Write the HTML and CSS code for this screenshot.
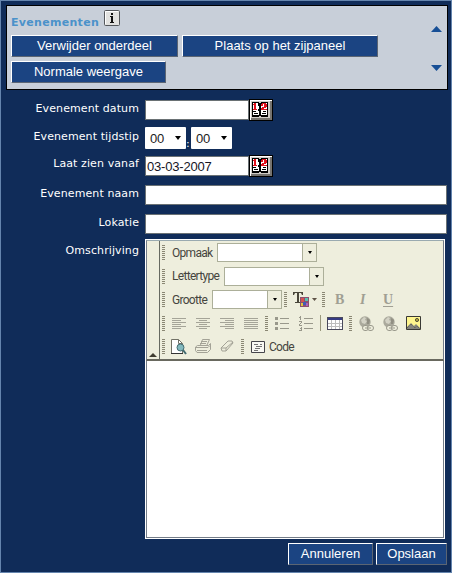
FILE: index.html
```html
<!DOCTYPE html>
<html lang="nl">
<head>
<meta charset="utf-8">
<title>Evenementen</title>
<link rel="stylesheet" href="styles.css">
</head>
<body>
<svg width="0" height="0" class="defs" aria-hidden="true">
  <symbol id="calendar" viewBox="0 0 24 22">
    <path fill="#000" d="M0 0h24v22H0z"/><path fill="#fff" d="M1 1h22v20H1z"/><path fill="#77746f" d="M2 2h21v19H2z"/><path fill="#d0cdc8" d="M2 2h19v17H2z"/>
    <path fill="#000" d="M3 3h7v1h2v-1h7v15h-7v-1h-2v1H3z"/><path fill="#fff" d="M4 4h6v12H4zM12 4h6v12h-6z"/>
    <path fill="#e0101c" d="M5 4h2v6h1v1H4v-1h1V6H4V5h1zM13 4h4v1h1v3h-1v1h-2v1h3v1h-6V9h1V8h2V5h-1v2h-2V5h1z"/>
    <path fill="#000" d="M9 4h1v3H9zM12 4h1v1h-1zM10 7h2v3h-2zM9 10h1v2H9zM10 12h2v5h-2zM5 14h4v1H5zM13 14h4v1h-4zM4 12h3v1H4zM14 12h3v1h-3z"/>
  </symbol>
  <symbol id="globe" viewBox="0 0 17 17">
    <circle cx="7" cy="7" r="5.7" fill="#aaa99c"/><path d="M3 5l3-3 2 1-1 2 2 1-2 3-3-1z" fill="#d3d2c5"/><path d="M9 3l3 2-1 4H9z" fill="#918f83"/>
    <g fill="#eeeedd" stroke="#99988b"><rect x="4.5" y="10.5" width="6" height="5" rx="2.5"/><rect x="9.5" y="10.5" width="6" height="5" rx="2.5"/><path d="M7 13h6"/></g>
  </symbol>
</svg>
<div class="frame">
  <header class="panel">
    <div class="panel-main">
      <div class="heading"><h1>Evenementen</h1>
        <svg class="info" width="16" height="16"><rect x=".5" y=".5" width="15" height="15" rx="1" fill="#e2e2e0" stroke="#55585c"/><path d="M1.500 14V1.500H14" stroke="#fff" fill="none"/><path d="M7 3h2v2H7zM6 6h3v6h1v1H6v-1h1V7H6z" fill="#111"/></svg>
      </div>
      <div class="actions"><button class="btn remove">Verwijder onderdeel</button><button class="btn place">Plaats op het zijpaneel</button><button class="btn normal">Normale weergave</button></div>
    </div>
    <div class="arrows">
      <svg width="11" height="6"><path d="M0 6l5.500-6L11 6z" fill="#174f96"/></svg>
      <svg width="11" height="6"><path d="M0 0h11L5.500 6z" fill="#174f96"/></svg>
    </div>
  </header>
  <main class="form">
    <label class="l1">Evenement datum</label><div class="field"><span class="input date"></span><svg class="cal" width="24" height="22"><use href="#calendar"/></svg></div>
    <label class="l2">Evenement tijdstip</label><div class="field"><span class="time">00<i class="down"></i></span><b class="colon">:</b><span class="time">00<i class="down"></i></span></div>
    <label class="l3">Laat zien vanaf</label><div class="field"><span class="input date"><span class="value">03-03-2007</span></span><svg class="cal" width="24" height="22"><use href="#calendar"/></svg></div>
    <label class="l4">Evenement naam</label><div class="field"><span class="input wide"></span></div>
    <label class="l5">Lokatie</label><div class="field"><span class="input wide"></span></div>
    <label class="l6">Omschrijving</label>
    <div class="editor">
      <div class="toolbar">
        <div class="gutter"><svg width="8" height="4"><path d="M0 4l4-4 4 4z" fill="#3f3c30"/></svg></div>
        <div class="rows">
          <div class="row"><i class="grip"></i><span class="name opmaak">Opmaak</span><span class="combo c100"><b><i></i></b></span></div>
          <div class="row"><i class="grip"></i><span class="name letter">Lettertype</span><span class="combo c100"><b><i></i></b></span></div>
          <div class="row"><i class="grip"></i><span class="name grootte">Grootte</span><span class="combo c70"><b><i></i></b></span><i class="grip second"></i>
            <svg class="gap6" width="25" height="17"><path fill="#49463a" d="M0 1h10v3H9l-1-2H6v9h2v1H2v-1h2V2H2L1 4H0z"/><path fill="#8a5170" d="M7 6h9v10H7z"/><path fill="#d45252" d="M8 7h3v4H8z"/><path fill="#59c1b1" d="M12 7h3v3h-3z"/><path fill="#e6c33d" d="M8 12h2v3H8z"/><path fill="#4359b6" d="M10 11h3v3h-3z"/><path fill="#ae60bd" d="M13 12h2v3h-2z"/><path fill="#5e5346" d="M19 7h5l-2.500 3z"/></svg>
            <i class="grip gap4"></i><span class="style bold">B</span><span class="style italic">I</span><span class="style underline">U</span>
          </div>
          <div class="row icons"><i class="grip"></i>
            <svg class="al1" width="14" height="13"><path d="M0 1.500h14M0 3.500h9M0 5.500h14M0 7.500h9M0 9.500h14M0 11.500h9" stroke="#a5a498"/></svg>
            <svg class="al" width="14" height="13"><path d="M0 1.500h14M3 3.500h8M0 5.500h14M3 7.500h8M0 9.500h14M3 11.500h8" stroke="#a5a498"/></svg>
            <svg class="al" width="14" height="13"><path d="M0 1.500h14M5 3.500h9M0 5.500h14M5 7.500h9M0 9.500h14M5 11.500h9" stroke="#a5a498"/></svg>
            <svg class="al" width="14" height="13"><path d="M0 1.500h14M0 3.500h14M0 5.500h14M0 7.500h14M0 9.500h14M0 11.500h14" stroke="#a5a498"/></svg>
            <i class="grip gap7"></i>
            <svg class="gap7" width="14" height="15"><path fill="#99988b" d="M0 1h3v3H0zM0 6h3v3H0zM0 11h3v3H0zM5 2h9v1H5zM5 7h9v1H5zM5 12h9v1H5z"/></svg>
            <svg class="al" width="14" height="15"><path fill="#99988b" d="M1 0h1v4H1zM0 1h1v1H0zM0 5h3v2H2v1H1v1h2v1H0V8h1V7h1V6H0zM0 11h3v4H0v-1h2v-1H1v-1h1v-1H0zM5 2h9v1H5zM5 7h9v1H5zM5 12h9v1H5z"/></svg>
            <i class="sep"></i>
            <svg class="gap6" width="16" height="13"><path fill="#49495c" d="M0 0h16v13H0z"/><path fill="#363b83" d="M1 1h14v2H1z"/><path fill="#fff" d="M1 3h14v9H1z"/><path d="M1 6.500h14M1 9.500h14M4.500 3v9M8.500 3v9M12.500 3v9" stroke="#bdbdbd"/></svg>
            <i class="grip gap6"></i>
            <svg class="gap6" width="17" height="17"><use href="#globe"/></svg><svg class="gap7" width="17" height="17"><use href="#globe"/></svg>
            <svg class="gap7" width="15" height="14"><path fill="#fff68e" stroke="#393935" d="M.5.500h14v13H.5z"/><path fill="#85857c" d="M1 11l4-4 3 3 2-2 4 4v1H1z"/><path d="M1 12l4-4 4 4 2-2 3 3" fill="none" stroke="#55554f" stroke-dasharray="1 1"/><circle cx="11" cy="4" r="1.600" fill="#b4aa43" stroke="#55513c"/></svg>
          </div>
          <div class="row"><i class="grip"></i>
            <svg class="preview" width="16" height="16"><path fill="#fff" stroke="#717166" d="M.5.500h7l4 4v10H.5z"/><path d="M0 14.500h12" stroke="#333"/><path d="M7.500.500v4h4" fill="none" stroke="#717166"/><circle cx="9.500" cy="8.500" r="3.500" fill="#83b9be" stroke="#426a70"/><path d="M12 11l3 4" stroke="#426a70" stroke-width="2"/></svg>
            <svg class="gap8" width="16" height="15"><path d="M5.500 6l2-5.500h7L12 6M2.500 6.500h11l2-2v6l-3 3H2l-1.500-2V8zM1 8.500h12l2-2M2 11.500h10M6 2.500h6M5 4.500h6" fill="none" stroke="#a3a296"/></svg>
            <svg class="gap9" width="14" height="13"><path d="M1 8l7-7h4l1 2-7 8H2zM1 8l5 0 7-6M6 8v3" fill="none" stroke="#a3a296"/></svg>
            <i class="grip gap7"></i>
            <svg class="gap7" width="14" height="12"><path d="M.5.500h13v11H.5z" fill="#f8f8f3" stroke="#45454b"/><path d="M3 3.500h4M5 5.500h6M4 7.500h5M3 9.500h4M9 3.500h2" stroke="#737373"/></svg><span class="code">Code</span>
          </div>
        </div>
      </div>
      <div class="canvas"></div>
    </div>
  </main>
  <footer><button class="btn cancel">Annuleren</button><button class="btn save">Opslaan</button></footer>
</div>
</body>
</html>
```

FILE: styles.css
```css
* { box-sizing: border-box; }
body { margin: 0; }
.defs { position: absolute; }
svg { display: block; flex: none; }
.frame { width: 452px; height: 573px; padding: 4px 3px 0 5px; background: #102c59; border: 1px solid #6585ae; font-family: "Liberation Sans", sans-serif; overflow: hidden; }
.panel { display: flex; justify-content: space-between; width: 442px; height: 85px; background: #c8cfd9; border: 1px solid #000; }
.panel-main { width: 390px; padding: 4px 0 0 4px; }
.heading { display: flex; height: 25px; }
h1 { margin: 4px 0 0; width: 93px; font: bold 11px/17px "DejaVu Sans", sans-serif; color: #4b92ca; letter-spacing: .3px; white-space: nowrap; }
.actions { display: flex; flex-wrap: wrap; gap: 4px; }
.btn { height: 22px; padding: 0 0 1px; border: 1px solid; border-color: #fff #5b6573 #5b6573 #fff; background: #1b4482; color: #fff; font: 13px/18px "Liberation Sans", sans-serif; white-space: nowrap; }
.remove { width: 167px; }
.place { width: 196px; }
.normal { width: 155px; }
.arrows { display: flex; flex-direction: column; gap: 33px; padding: 20px 5px 0 0; }
.form { display: grid; grid-template-columns: 133px 302px; grid-template-rows: 28px 28px 29px 29px 29px 301px; column-gap: 6px; padding-top: 9px; }
label { font: 11px/14px "DejaVu Sans", sans-serif; color: #fff; text-align: right; padding-top: 3px; white-space: nowrap; letter-spacing: .1px; }
.l3, .l6 { padding-top: 2px; }
.field { display: flex; align-items: flex-start; }
.input { height: 20px; margin-top: 1px; background: #fff; border: 1px solid #6a7174; }
.date { width: 104px; }
.wide { width: 302px; }
.value { display: block; font-size: 13px; line-height: 19px; letter-spacing: -.2px; padding-left: 1px; color: #151525; }
.time { display: flex; align-items: center; justify-content: space-between; width: 41px; height: 22px; padding: 0 5px; background: #fff; border-radius: 1px; font-size: 13px; letter-spacing: -.3px; color: #222; }
.down { border: 3.5px solid transparent; border-top: 4px solid #000; border-bottom: 0; }
.colon { width: 5px; font: 11px/34px "DejaVu Sans", sans-serif; height: 27px; color: #fff; }
.editor { width: 300px; height: 300px; margin-top: -3px; border: 1px solid #fff; display: flex; flex-direction: column; }
.toolbar { display: flex; height: 121px; background: #eeeedd; border: 1px solid #737c88; border-top-color: #9aaab0; border-bottom: 2px solid #69695f; }
.gutter { width: 13px; border-right: 1px solid #666960; display: flex; align-items: flex-end; padding: 0 0 2px 2px; }
.rows { padding: 0 0 0 2px; }
.row { display: flex; align-items: center; height: 23.5px; }
.grip { flex: none; width: 3px; height: 15px; background: repeating-linear-gradient(#8a8774 0 1px, #eeeedd 1px 2px); }
.name, .code { font: 12px/16px Roboto, sans-serif; color: #45453e; white-space: nowrap; margin-left: 7px; }
.opmaak { width: 45px; letter-spacing: -.7px; }
.letter { width: 52px; letter-spacing: -.7px; }
.grootte { width: 40px; letter-spacing: -.7px; }
.code { margin-left: 4px; letter-spacing: -.7px; }
.combo { display: flex; justify-content: flex-end; height: 19px; background: #fff; border: 1px solid #acaf99; }
.c100 { width: 100px; }
.c70 { width: 70px; }
.combo b { display: flex; align-items: center; justify-content: center; width: 14px; height: 17px; border-left: 1px solid #acaf99; background: #eeeedd; }
.combo i { border: 2.5px solid transparent; border-top: 3px solid #000; border-bottom: 0; }
.second { margin-left: 2px; }
.gap4 { margin-left: 4px; }
.gap6 { margin-left: 6px; }
.gap7 { margin-left: 7px; }
.gap8 { margin-left: 8px; }
.gap9 { margin-left: 9px; }
.style { width: 24px; font: bold 14px/16px "Liberation Serif", serif; color: #a09f93; }
.bold { margin-left: 10px; }
.italic { padding-left: 1px; font-style: italic; }
.underline { width: auto; text-decoration: underline; text-underline-offset: 2px; }
.al1, .al { margin-left: 10px; }
.al1 { margin-left: 7px; }
.sep { width: 1px; height: 16px; margin-left: 7px; background: #99977c; }
.preview { margin-left: 6px; }
.canvas { flex: 1; background: #fff; border: 1px solid #737c88; border-top: 0; }
footer { display: flex; gap: 3px; padding: 0 0 0 282px; margin-top: 0; }
.cancel { width: 85px; }
.save { width: 71px; }
```
